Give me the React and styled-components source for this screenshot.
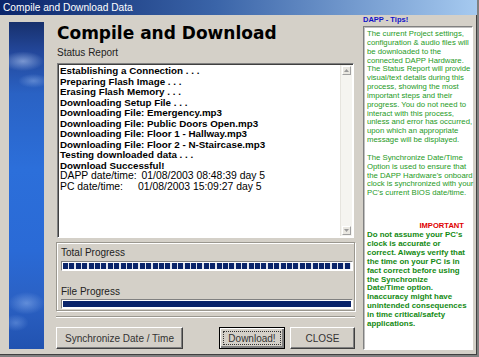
import React from "react";
import styled, { createGlobalStyle } from "styled-components";

const GlobalStyle = createGlobalStyle`
  html, body {
    margin: 0;
    padding: 0;
    background: #d4d0c8;
  }
`;

const Window = styled.div`
  width: 479px;
  height: 357px;
  box-sizing: border-box;
  background: #d4d0c8;
  border-right: 2px solid #808080;
  border-bottom: 2px solid #808080;
  box-shadow: inset -1px -1px #404040;
  display: flex;
  flex-direction: column;
  font-family: "Liberation Sans", Arial, sans-serif;
  overflow: hidden;
`;

const TitleBar = styled.div`
  height: 15px;
  flex: none;
  background: linear-gradient(90deg, #0a246a 0%, #3a64a8 45%, #a6caf0 100%);
  color: #fff;
  font-size: 10.2px;
  line-height: 15px;
  padding-left: 3px;
  white-space: nowrap;
`;

const Content = styled.div`
  display: flex;
  align-items: flex-start;
  padding-left: 9px;
`;

const SideArt = styled.div`
  flex: none;
  width: 35px;
  height: 327px;
  margin-top: 7px;
  background:
    radial-gradient(ellipse 30px 14px at 40% 12%, rgba(190, 210, 245, 0.55), transparent 70%),
    radial-gradient(ellipse 22px 10px at 70% 18%, rgba(170, 200, 245, 0.4), transparent 70%),
    radial-gradient(ellipse 26px 16px at 50% 86%, rgba(150, 185, 240, 0.5), transparent 70%),
    radial-gradient(ellipse 18px 12px at 20% 92%, rgba(130, 170, 235, 0.45), transparent 70%),
    linear-gradient(180deg, #17306c 0%, #23479a 9%, #2a62c4 22%, #2c6fda 45%, #2a6ad6 70%, #2b61c4 85%, #2152b0 100%);
`;

const Main = styled.div`
  flex: none;
  width: 300px;
  margin-left: 12px;
  margin-top: 8px;
  display: flex;
  flex-direction: column;
`;

const Heading = styled.h1`
  margin: 0 0 0 1px;
  font-family: "DejaVu Sans", Verdana, sans-serif;
  font-weight: bold;
  font-size: 17px;
  line-height: 20px;
  color: #000;
  white-space: nowrap;
`;

const Label = styled.div`
  margin: 4px 0 0 1px;
  font-size: 10px;
  line-height: 12px;
  color: #222;
  white-space: nowrap;
`;

const ListBox = styled.div`
  margin: 4px 0 0 1px;
  width: 297px;
  height: 175px;
  box-sizing: border-box;
  background: #fff;
  border: 1px solid;
  border-color: #808080 #fff #fff #808080;
  box-shadow: inset 1px 1px #404040;
  display: flex;
`;

const ListItems = styled.div`
  flex: 1;
  padding: 2px 0 0 2px;
`;

const Item = styled.div`
  font-size: ${(p) => (p.$regular ? "10.4px" : "9.8px")};
  font-weight: ${(p) => (p.$regular ? "normal" : "bold")};
  line-height: 10.5px;
  color: #000;
  white-space: nowrap;
`;

const ItemLabel = styled.span`
  display: inline-block;
  width: ${(p) => p.$w}px;
`;

const ScrollBar = styled.div`
  flex: none;
  width: 11px;
  margin: 1px 1px 1px 0;
  background: #f5f4f0;
  border-left: 1px solid #e6e4de;
  display: flex;
  flex-direction: column;
  justify-content: space-between;
`;

const ScrollArrow = styled.div`
  width: 9px;
  height: 9px;
  margin: 1px;
  box-sizing: border-box;
  background: #e9e7e1;
  border: 1px solid;
  border-color: #fff #a0a0a0 #a0a0a0 #fff;
  display: flex;
  align-items: center;
  justify-content: center;
`;

const GroupBox = styled.div`
  margin-top: 4px;
  width: 299px;
  height: 69px;
  box-sizing: border-box;
  border: 1px solid #9a978f;
  box-shadow: 1px 1px #fff, inset 1px 1px #fff;
  padding: 4px 2px 0 4px;
`;

const GroupLabel = styled.div`
  margin-top: ${(p) => p.$top || 0}px;
  font-size: 10px;
  line-height: 11px;
  color: #222;
  white-space: nowrap;
`;

const Bar = styled.div`
  margin-top: ${(p) => p.$top}px;
  width: 292px;
  height: 10px;
  box-sizing: border-box;
  border: 1px solid;
  border-color: #808080 #fff #fff #808080;
  background: #fff;
  padding: 1px;
`;

const BarFill = styled.div`
  height: 100%;
  background: ${(p) =>
    p.$segmented
      ? "repeating-linear-gradient(90deg, #0a246a 0px, #0a246a 5px, #dfe3ee 5px, #dfe3ee 6.4px)"
      : "#0a246a"};
`;

const Separator = styled.div`
  margin-top: 5px;
  width: 299px;
  height: 0;
  border-top: 1px solid #9a978f;
  border-bottom: 1px solid #fff;
`;

const ButtonRow = styled.div`
  margin-top: 9px;
  display: flex;
  align-items: center;
`;

const Button = styled.div`
  width: ${(p) => p.$w}px;
  height: 22px;
  margin-left: ${(p) => p.$ml || 0}px;
  box-sizing: border-box;
  background: #d4d0c8;
  border: 1px solid;
  border-color: ${(p) => (p.$default ? "#000" : "#fff #404040 #404040 #fff")};
  box-shadow: ${(p) =>
    p.$default
      ? "inset 1px 1px #fff, inset -2px -2px #808080"
      : "inset -1px -1px #808080"};
  display: flex;
  align-items: center;
  justify-content: center;
  font-size: 10px;
  color: #333;
  white-space: nowrap;
  padding: 3px;
`;

const FocusRect = styled.div`
  flex: 1;
  align-self: stretch;
  border: 1px dotted #333;
  display: flex;
  align-items: center;
  justify-content: center;
`;

const Tips = styled.div`
  flex: none;
  width: 110px;
  margin-left: 7px;
  display: flex;
  flex-direction: column;
`;

const TipsTitle = styled.div`
  font-size: 7.5px;
  font-weight: bold;
  line-height: 10px;
  color: #1010c8;
  white-space: nowrap;
`;

const TipsBox = styled.div`
  margin-top: 1px;
  height: 324px;
  box-sizing: border-box;
  background: #fff;
  border: 1px solid;
  border-color: #808080 #fff #fff #808080;
  box-shadow: inset 1px 1px #c0c0c0;
  padding: 3px 0 0 3px;
`;

const TipLine = styled.div`
  font-size: 7.75px;
  line-height: 8.85px;
  height: 8.85px;
  color: #1e9a1e;
  white-space: nowrap;
`;

const Important = styled.div`
  margin-top: 23px;
  padding-right: 8px;
  text-align: right;
  font-size: 7.6px;
  font-weight: bold;
  line-height: 9px;
  color: #e00000;
`;

const Warn = styled.div`
  margin-top: 1px;
`;

const WarnLine = styled.div`
  font-size: 7.9px;
  font-weight: bold;
  line-height: 8.9px;
  color: #138a13;
  white-space: nowrap;
`;

const items = [
  "Establishing a Connection . . .",
  "Preparing Flash Image . . .",
  "Erasing Flash Memory . . .",
  "Downloading Setup File . . .",
  "Downloading File: Emergency.mp3",
  "Downloading File: Public Doors Open.mp3",
  "Downloading File: Floor 1 - Hallway.mp3",
  "Downloading File: Floor 2 - N-Staircase.mp3",
  "Testing downloaded data . . .",
  "Download Successful!",
];

const tips = [
  "The current Project settings,",
  "configuration & audio files will",
  "be downloaded to the",
  "connected DAPP Hardware.",
  "The Status Report will provide",
  "visual/text details during this",
  "process, showing the most",
  "important steps and their",
  "progress. You do not need to",
  "interact with this process,",
  "unless and error has occurred,",
  "upon which an appropriate",
  "message will be displayed.",
  "",
  "The Synchronize Date/Time",
  "Option is used to ensure that",
  "the DAPP Hardware's onboard",
  "clock is synchronized with your",
  "PC's current BIOS date/time.",
];

const warning = [
  "Do not assume your PC's",
  "clock is accurate or",
  "correct. Always verify that",
  "the time on your PC is in",
  "fact correct before using",
  "the Synchronize",
  "Date/Time option.",
  "Inaccuracy might have",
  "unintended consequences",
  "in time critical/safety",
  "applications.",
];

const Arrow = ({ down }) => (
  <svg width="5" height="3" viewBox="0 0 5 3">
    <path d={down ? "M0 0h5L2.5 3z" : "M0 3h5L2.5 0z"} fill="#9a9a9a" />
  </svg>
);

export default function App() {
  return (
    <>
      <GlobalStyle />
      <Window>
        <TitleBar>Compile and Download Data</TitleBar>
        <Content>
          <SideArt />
          <Main>
            <Heading>Compile and Download</Heading>
            <Label>Status Report</Label>
            <ListBox>
              <ListItems>
                {items.map((t) => (
                  <Item key={t}>{t}</Item>
                ))}
                <Item $regular>
                  <ItemLabel $w={81.5}>DAPP date/time:</ItemLabel>01/08/2003 08:48:39 day 5
                </Item>
                <Item $regular>
                  <ItemLabel $w={78}>PC date/time:</ItemLabel>01/08/2003 15:09:27 day 5
                </Item>
              </ListItems>
              <ScrollBar>
                <ScrollArrow>
                  <Arrow />
                </ScrollArrow>
                <ScrollArrow>
                  <Arrow down />
                </ScrollArrow>
              </ScrollBar>
            </ListBox>
            <GroupBox>
              <GroupLabel>Total Progress</GroupLabel>
              <Bar $top={3}>
                <BarFill $segmented />
              </Bar>
              <GroupLabel $top={15}>File Progress</GroupLabel>
              <Bar $top={2}>
                <BarFill />
              </Bar>
            </GroupBox>
            <Separator />
            <ButtonRow>
              <Button $w={127}>Synchronize Date / Time</Button>
              <Button $w={66} $ml={36} $default>
                <FocusRect>Download!</FocusRect>
              </Button>
              <Button $w={65} $ml={5}>CLOSE</Button>
            </ButtonRow>
          </Main>
          <Tips>
            <TipsTitle>DAPP - Tips!</TipsTitle>
            <TipsBox>
              {tips.map((t, i) => (
                <TipLine key={i}>{t}</TipLine>
              ))}
              <Important>IMPORTANT</Important>
              <Warn>
                {warning.map((t) => (
                  <WarnLine key={t}>{t}</WarnLine>
                ))}
              </Warn>
            </TipsBox>
          </Tips>
        </Content>
      </Window>
    </>
  );
}
